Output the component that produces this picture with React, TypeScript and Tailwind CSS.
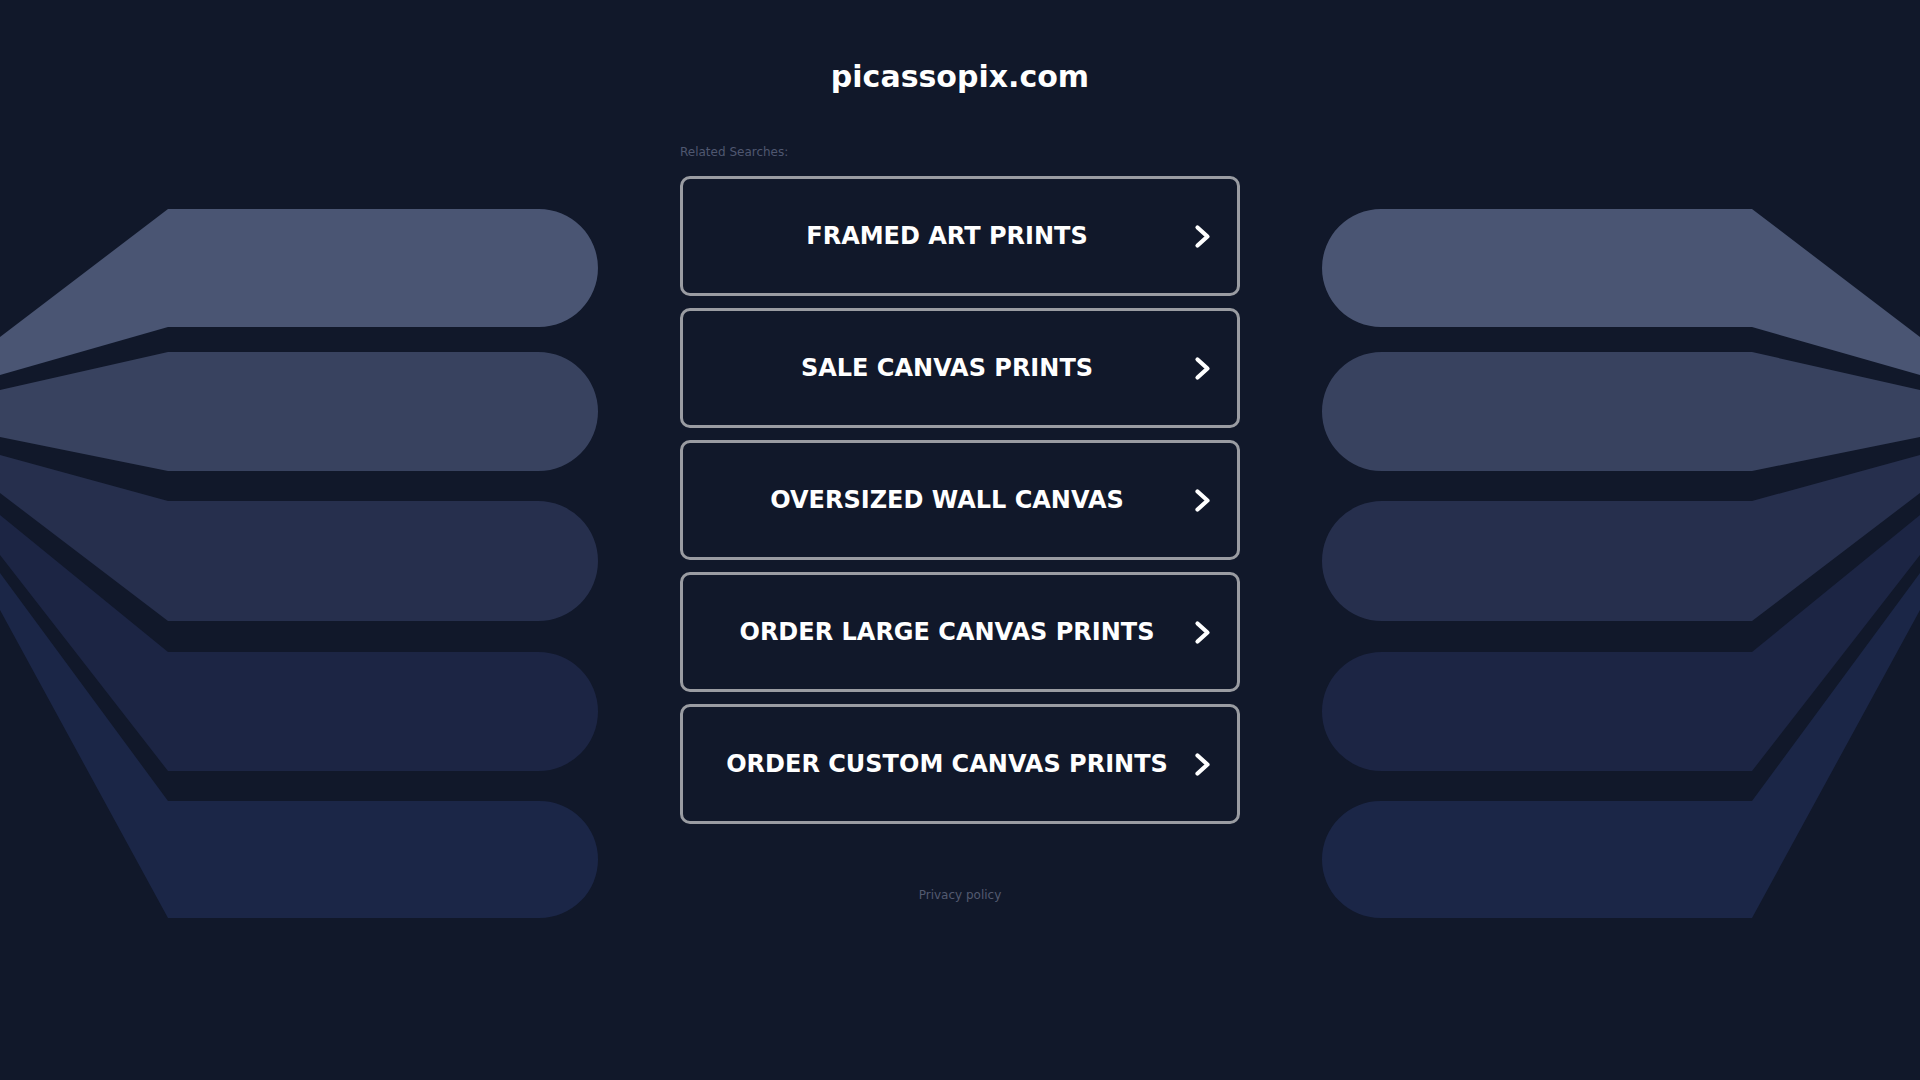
import React from "react";

type Bar = { top: number; bottom: number; lt: number; lb: number; fill: string };

const bars: Bar[] = [
  { top: 209, bottom: 327, lt: 337, lb: 375, fill: "#4a5573" },
  { top: 352, bottom: 471, lt: 390, lb: 437, fill: "#38425f" },
  { top: 501, bottom: 621, lt: 455, lb: 493, fill: "#262f4d" },
  { top: 652, bottom: 771, lt: 515, lb: 555, fill: "#1c2544" },
  { top: 801, bottom: 918, lt: 573, lb: 610, fill: "#1b2647" },
];

function barPath(b: Bar) {
  const r = (b.bottom - b.top) / 2;
  const endX = 598 - r;
  return `M0,${b.lt} L168,${b.top} L${endX},${b.top} A${r},${r} 0 0 1 ${endX},${b.bottom} L168,${b.bottom} L0,${b.lb} Z`;
}

function Fan({ mirror }: { mirror?: boolean }) {
  return (
    <svg
      width="600"
      height="1080"
      viewBox="0 0 600 1080"
      className={mirror ? "absolute right-0 top-0" : "absolute left-0 top-0"}
    >
      <g transform={mirror ? "translate(600,0) scale(-1,1)" : undefined}>
        {bars.map((b, i) => (
          <path key={i} d={barPath(b)} fill={b.fill} />
        ))}
      </g>
    </svg>
  );
}

function Chevron() {
  return (
    <svg width="17" height="25" viewBox="0 0 17 25" className="shrink-0">
      <polyline
        points="3.5,3.5 13.5,12.5 3.5,21.5"
        fill="none"
        stroke="#ffffff"
        strokeWidth="4.2"
        strokeLinecap="round"
        strokeLinejoin="round"
      />
    </svg>
  );
}

const items = [
  "FRAMED ART PRINTS",
  "SALE CANVAS PRINTS",
  "OVERSIZED WALL CANVAS",
  "ORDER LARGE CANVAS PRINTS",
  "ORDER CUSTOM CANVAS PRINTS",
];

export default function App() {
  return (
    <div className="relative h-[1080px] w-full overflow-hidden bg-[#11182a] font-['DejaVu_Sans',sans-serif]">
      <Fan />
      <Fan mirror />
      <div className="relative flex flex-col items-center pt-[59px]">
        <h1 className="text-[30px] leading-[35px] font-bold text-white">picassopix.com</h1>
        <div className="mt-[51px] w-[560px]">
          <div className="text-[12px] leading-[14px] text-[#4f5770]">Related Searches:</div>
          <div className="mt-[17px] flex flex-col gap-[12px]">
            {items.map((t) => (
              <a
                key={t}
                href="#"
                className="flex h-[120px] items-center rounded-[10px] border-[3px] border-[#9a9ca2] pl-[25px] pr-[26px]"
              >
                <span className="flex-1 text-center text-[24px] font-bold text-white">{t}</span>
                <span className="ml-[8px]">
                  <Chevron />
                </span>
              </a>
            ))}
          </div>
        </div>
        <div className="mt-[64px] text-[12px] leading-[14px] text-[#535a70]">Privacy policy</div>
      </div>
    </div>
  );
}
